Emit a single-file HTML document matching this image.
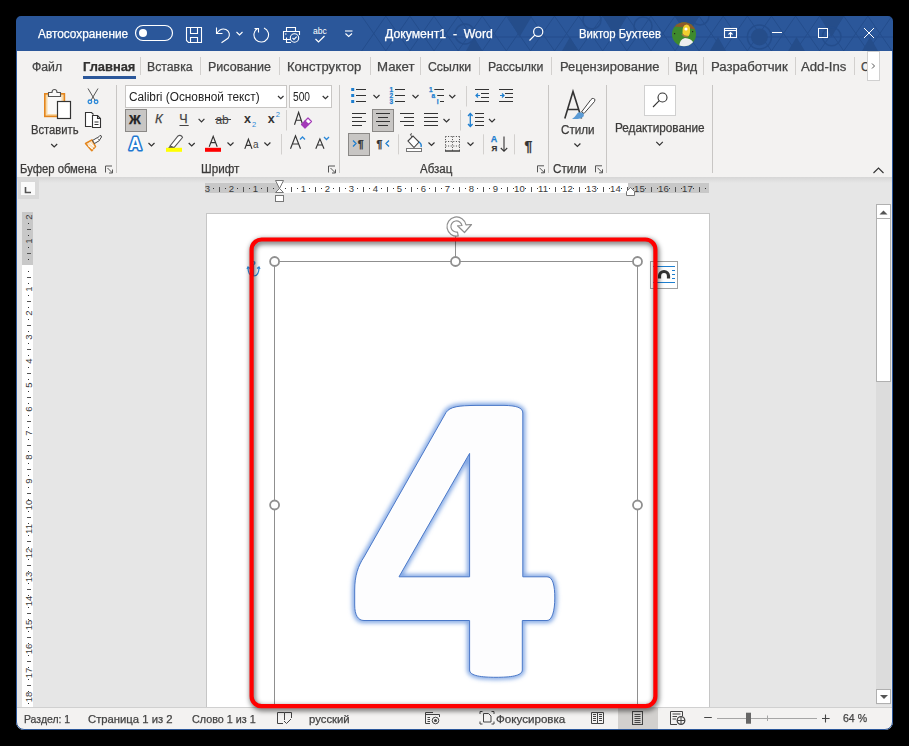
<!DOCTYPE html>
<html><head><meta charset="utf-8"><style>
html,body{margin:0;padding:0;}
body{width:909px;height:746px;background:#000;position:relative;overflow:hidden;font-family:"Liberation Sans", sans-serif;}
.t{position:absolute;white-space:nowrap;font-family:"Liberation Sans", sans-serif;-webkit-text-stroke:0.25px currentColor;}
svg.ov{position:absolute;left:0;top:0;width:909px;height:746px;}
</style></head><body>
<div style="position:absolute;left:16px;top:16px;width:877px;height:714px;background:#f3f2f1;"></div><div style="position:absolute;left:16px;top:16px;width:877px;height:35px;background:#2b579a;"></div><div style="position:absolute;left:17px;top:177px;width:875px;height:530px;background:#e6e6e6;"></div><div style="position:absolute;left:17px;top:177px;width:875px;height:6px;background:linear-gradient(#d6d6d6,#e6e6e6);"></div><div style="position:absolute;left:206px;top:213px;width:504px;height:494px;background:#fff;box-sizing:border-box;border:1px solid #c6c6c6;border-bottom:none;"></div><div style="position:absolute;left:17px;top:707px;width:875px;height:22px;background:#f3f2f1;border-top:1px solid #d0d0d0;box-sizing:border-box;"></div><svg class="ov" width="909" height="746" viewBox="0 0 909 746"><clipPath id="tb"><rect x="16" y="16" width="877" height="35"/></clipPath><g clip-path="url(#tb)"><path d="M361.7,16.1L397.9,68.3M385.8,16.1L349.7,68.3" stroke="#244d8c" stroke-width="1" fill="none"/><path d="M385.8,16.1L422.0,68.3M409.9,16.1L373.8,68.3" stroke="#244d8c" stroke-width="1" fill="none"/><path d="M409.9,16.1L446.1,68.3M434.0,16.1L397.9,68.3" stroke="#244d8c" stroke-width="1" fill="none"/><path d="M434.0,16.1L470.2,68.3M458.1,16.1L422.0,68.3" stroke="#244d8c" stroke-width="1" fill="none"/><path d="M458.1,16.1L494.3,68.3M482.2,16.1L446.1,68.3" stroke="#244d8c" stroke-width="1" fill="none"/><path d="M482.2,16.1L518.4,68.3M506.3,16.1L470.2,68.3" stroke="#244d8c" stroke-width="1" fill="none"/><path d="M506.3,16.1L542.5,68.3M530.4,16.1L494.3,68.3" stroke="#244d8c" stroke-width="1" fill="none"/><path d="M530.5,16.1L566.6,68.3M554.5,16.1L518.4,68.3" stroke="#244d8c" stroke-width="1" fill="none"/><path d="M554.5,16.1L590.7,68.3M578.6,16.1L542.5,68.3" stroke="#244d8c" stroke-width="1" fill="none"/><path d="M578.6,16.1L614.8,68.3M602.7,16.1L566.6,68.3" stroke="#244d8c" stroke-width="1" fill="none"/><path d="M602.8,16.1L638.9,68.3M626.8,16.1L590.7,68.3" stroke="#244d8c" stroke-width="1" fill="none"/><path d="M626.9,16.1L663.0,68.3M650.9,16.1L614.8,68.3" stroke="#244d8c" stroke-width="1" fill="none"/><path d="M651.0,16.1L687.1,68.3M675.0,16.1L638.9,68.3" stroke="#244d8c" stroke-width="1" fill="none"/><path d="M675.0,16.1L711.2,68.3M699.1,16.1L663.0,68.3" stroke="#244d8c" stroke-width="1" fill="none"/><path d="M699.1,16.1L735.3,68.3M723.2,16.1L687.1,68.3" stroke="#244d8c" stroke-width="1" fill="none"/><path d="M723.2,16.1L759.4,68.3M747.3,16.1L711.2,68.3" stroke="#244d8c" stroke-width="1" fill="none"/><path d="M747.4,16.1L783.5,68.3M771.4,16.1L735.3,68.3" stroke="#244d8c" stroke-width="1" fill="none"/><path d="M771.5,16.1L807.6,68.3M795.5,16.1L759.4,68.3" stroke="#244d8c" stroke-width="1" fill="none"/><path d="M795.6,16.1L831.7,68.3M819.6,16.1L783.5,68.3" stroke="#244d8c" stroke-width="1" fill="none"/><path d="M819.7,16.1L855.8,68.3M843.8,16.1L807.6,68.3" stroke="#244d8c" stroke-width="1" fill="none"/><path d="M843.8,16.1L879.9,68.3M867.8,16.1L831.7,68.3" stroke="#244d8c" stroke-width="1" fill="none"/><path d="M867.9,16.1L904.0,68.3M891.9,16.1L855.8,68.3" stroke="#244d8c" stroke-width="1" fill="none"/><path d="M892.0,16.1L928.1,68.3M916.0,16.1L879.9,68.3" stroke="#244d8c" stroke-width="1" fill="none"/><path d="M916.1,16.1L952.2,68.3M940.1,16.1L904.0,68.3" stroke="#244d8c" stroke-width="1" fill="none"/><path d="M940.2,16.1L976.3,68.3M964.2,16.1L928.1,68.3" stroke="#244d8c" stroke-width="1" fill="none"/><path d="M964.2,16.1L1000.4,68.3M988.3,16.1L952.2,68.3" stroke="#244d8c" stroke-width="1" fill="none"/><path d="M988.4,16.1L1024.5,68.3M1012.4,16.1L976.3,68.3" stroke="#244d8c" stroke-width="1" fill="none"/><path d="M1012.5,16.1L1048.6,68.3M1036.5,16.1L1000.4,68.3" stroke="#244d8c" stroke-width="1" fill="none"/><path d="M1036.5,16.1L1072.7,68.3M1060.6,16.1L1024.5,68.3" stroke="#244d8c" stroke-width="1" fill="none"/><path d="M1060.7,16.1L1096.8,68.3M1084.8,16.1L1048.6,68.3" stroke="#244d8c" stroke-width="1" fill="none"/><path d="M1084.8,16.1L1120.9,68.3M1108.8,16.1L1072.7,68.3" stroke="#244d8c" stroke-width="1" fill="none"/><path d="M1108.9,16.1L1145.0,68.3M1133.0,16.1L1096.8,68.3" stroke="#244d8c" stroke-width="1" fill="none"/><path d="M1133.0,16.1L1169.1,68.3M1157.0,16.1L1120.9,68.3" stroke="#244d8c" stroke-width="1" fill="none"/><path d="M1157.0,16.1L1193.2,68.3M1181.1,16.1L1145.0,68.3" stroke="#244d8c" stroke-width="1" fill="none"/><path d="M1181.2,16.1L1217.3,68.3M1205.2,16.1L1169.1,68.3" stroke="#244d8c" stroke-width="1" fill="none"/><path d="M1205.2,16.1L1241.4,68.3M1229.3,16.1L1193.2,68.3" stroke="#244d8c" stroke-width="1" fill="none"/><path d="M1229.4,16.1L1265.5,68.3M1253.5,16.1L1217.3,68.3" stroke="#244d8c" stroke-width="1" fill="none"/><path d="M1253.5,16.1L1289.6,68.3M1277.5,16.1L1241.4,68.3" stroke="#244d8c" stroke-width="1" fill="none"/><path d="M1277.5,16.1L1313.7,68.3M1301.6,16.1L1265.5,68.3" stroke="#244d8c" stroke-width="1" fill="none"/><path d="M1301.7,16.1L1337.8,68.3M1325.8,16.1L1289.6,68.3" stroke="#244d8c" stroke-width="1" fill="none"/><path d="M1325.8,16.1L1361.9,68.3M1349.9,16.1L1313.7,68.3" stroke="#244d8c" stroke-width="1" fill="none"/><path d="M400,37H893" stroke="#244d8c" stroke-width="1"/><path d="M819.6,16L831.6500000000001,37L843.7,16Z" fill="#254d8a"/><path d="M507,16L519.5,37L532,16Z" fill="#254d8a"/><path d="M603,16L615.0,37L627,16Z" fill="#254d8a"/><path d="M675,16L687.0,37L699,16Z" fill="#254d8a"/><path d="M784,58L796.5,37L809,58Z" fill="#254d8a"/><path d="M858,58L870.0,37L882,58Z" fill="#254d8a"/><path d="M706,58L718.0,37L730,58Z" fill="#254d8a"/><path d="M558,58L570.0,37L582,58Z" fill="#254d8a"/><path d="M462,58L474.0,37L486,58Z" fill="#254d8a"/><circle cx="831.7" cy="36.5" r="9.3" fill="none" stroke="#244d8c" stroke-width="1.5"/><circle cx="465" cy="34" r="10" fill="none" stroke="#244d8c" stroke-width="1.5"/><circle cx="592" cy="20" r="9" fill="none" stroke="#244d8c" stroke-width="1.5"/><circle cx="643" cy="26" r="9" fill="none" stroke="#244d8c" stroke-width="1.5"/><circle cx="759.4" cy="37" r="12" fill="none" stroke="#244d8c" stroke-width="1.5"/><circle cx="700" cy="16" r="9" fill="none" stroke="#244d8c" stroke-width="1.5"/><circle cx="759.4" cy="37" r="8.4" fill="#254d8a"/></g></svg><div class="t" style="left:38.00px;top:28.14px;font-size:12px;line-height:12px;color:#ffffff;transform:scaleX(0.985);transform-origin:0 0;">Автосохранение</div><div class="t" style="left:385.00px;top:28.14px;font-size:12px;line-height:12px;color:#ffffff;transform:scaleX(1.02);transform-origin:0 0;">Документ1&nbsp;&nbsp;-&nbsp;&nbsp;Word</div><div class="t" style="left:578.50px;top:28.14px;font-size:12px;line-height:12px;color:#ffffff;transform:scaleX(0.945);transform-origin:0 0;">Виктор Бухтеев</div><svg class="ov" width="909" height="746" viewBox="0 0 909 746"><rect x="135.5" y="25.5" width="37" height="15" rx="7.5" fill="none" stroke="#ffffff" stroke-width="1.2"/><circle cx="143" cy="33" r="4" fill="#ffffff"/><g fill="none" stroke="#ffffff" stroke-width="1.1"><path d="M186.5,27.5H201.5V42.5H188.5L186.5,40.5Z"/><path d="M190.5,27.5V33.5H197.5V27.5"/><path d="M190.5,42.5V37.5H197.5V42.5"/></g><g fill="none" stroke="#ffffff" stroke-width="1.1"><path d="M216.5,27.5V33.5H222.5"/><path d="M216.8,33.2C219.5,29.5 223,28.3 226,29.5C229.5,31 230.5,35.5 228,38.3L221.5,42.7"/><path d="M236.5,32L239.5,35L242.5,32"/></g><g fill="none" stroke="#ffffff" stroke-width="1.1"><path d="M257.5,28.5A7.3,7.3 0 1 0 264,28"/><path d="M254.5,28.5H258.5V32.5"/></g><g fill="none" stroke="#ffffff" stroke-width="1.1"><path d="M286.5,31.5V27.5H295.5V31.5"/><path d="M290.5,39.5H283.5V31.5H299.5V35"/><path d="M286.5,37.5V42.5H291"/><circle cx="294.5" cy="38" r="4.2"/><path d="M292.5,38L294,39.5L296.7,36.7"/><path d="M285,34H286.5"/></g><text x="313" y="33.8" font-family="Liberation Sans" font-size="8.5" fill="#ffffff">abc</text><path d="M315.5,39L318.5,42L324.5,36" fill="none" stroke="#ffffff" stroke-width="1.2"/><g fill="none" stroke="#ffffff" stroke-width="1.1"><path d="M345,31H352.5"/><path d="M345.5,33.5L348.7,36.5L352,33.5"/></g><g fill="none" stroke="#ffffff" stroke-width="1.2"><circle cx="538.2" cy="31.8" r="4.6"/><path d="M534.8,35.2L529.5,40.5"/></g><clipPath id="av"><circle cx="684" cy="34.2" r="12"/></clipPath><g clip-path="url(#av)"><rect x="672" y="22" width="25" height="25" fill="#3e8a2e"/><path d="M672,27Q684,26 697,30V20H672Z" fill="#8b5a2b"/><path d="M682.5,33Q682,25 686.5,24.5Q690.5,25 690,30Q690.5,35 687.5,37Q683,37.5 682.5,33Z" fill="#f2cf2f"/><circle cx="686" cy="29" r="1.6" fill="#fff"/><path d="M682,34Q684,37 688,36.5" fill="none" stroke="#a07a40" stroke-width="1.5"/><path d="M679,47Q679.5,39 685,38Q691,38.5 693,42L694.5,47Z" fill="#eeeeee"/><rect x="674" y="33" width="1.2" height="1.2" fill="#222"/><rect x="692" y="31" width="1.2" height="1.2" fill="#222"/></g><g fill="none" stroke="#ffffff" stroke-width="1.1"><rect x="724.5" y="28.5" width="12" height="9"/><path d="M724.5,30.5H736.5"/><path d="M730.5,37V32.5M728.5,34.5L730.5,32.5L732.5,34.5"/></g><g fill="none" stroke="#ffffff" stroke-width="1"><path d="M772,32.5H782"/><rect x="818.5" y="28.5" width="9" height="9"/><path d="M864,28L874,38M874,28L864,38"/></g></svg><div class="t" style="left:31.70px;top:60.84px;font-size:12px;line-height:12px;color:#444444;transform:scaleX(1.02);transform-origin:0 0;">Файл</div><div class="t" style="left:83.20px;top:60.84px;font-size:12px;line-height:12px;color:#323130;font-weight:bold;transform:scaleX(1.072);transform-origin:0 0;">Главная</div><div class="t" style="left:147.20px;top:60.84px;font-size:12px;line-height:12px;color:#444444;transform:scaleX(1.022);transform-origin:0 0;">Вставка</div><div class="t" style="left:207.80px;top:60.84px;font-size:12px;line-height:12px;color:#444444;transform:scaleX(1.041);transform-origin:0 0;">Рисование</div><div class="t" style="left:287.00px;top:60.84px;font-size:12px;line-height:12px;color:#444444;transform:scaleX(1.086);transform-origin:0 0;">Конструктор</div><div class="t" style="left:376.60px;top:60.84px;font-size:12px;line-height:12px;color:#444444;transform:scaleX(1.103);transform-origin:0 0;">Макет</div><div class="t" style="left:427.90px;top:60.84px;font-size:12px;line-height:12px;color:#444444;transform:scaleX(1.021);transform-origin:0 0;">Ссылки</div><div class="t" style="left:487.50px;top:60.84px;font-size:12px;line-height:12px;color:#444444;transform:scaleX(1.026);transform-origin:0 0;">Рассылки</div><div class="t" style="left:559.60px;top:60.84px;font-size:12px;line-height:12px;color:#444444;transform:scaleX(1.072);transform-origin:0 0;">Рецензирование</div><div class="t" style="left:674.60px;top:60.84px;font-size:12px;line-height:12px;color:#444444;transform:scaleX(1.023);transform-origin:0 0;">Вид</div><div class="t" style="left:710.60px;top:60.84px;font-size:12px;line-height:12px;color:#444444;transform:scaleX(1.096);transform-origin:0 0;">Разработчик</div><div class="t" style="left:801.40px;top:60.84px;font-size:12px;line-height:12px;color:#444444;transform:scaleX(1.097);transform-origin:0 0;">Add-Ins</div><div class="t" style="left:861.00px;top:60.84px;font-size:12px;line-height:12px;color:#444;">C</div><svg class="ov" width="909" height="746" viewBox="0 0 909 746"><path d="M140.5,57V75" stroke="#d2d0ce" stroke-width="1"/><path d="M200.5,57V75" stroke="#d2d0ce" stroke-width="1"/><path d="M279.5,57V75" stroke="#d2d0ce" stroke-width="1"/><path d="M370.5,57V75" stroke="#d2d0ce" stroke-width="1"/><path d="M420.5,57V75" stroke="#d2d0ce" stroke-width="1"/><path d="M479.5,57V75" stroke="#d2d0ce" stroke-width="1"/><path d="M551.5,57V75" stroke="#d2d0ce" stroke-width="1"/><path d="M668.5,57V75" stroke="#d2d0ce" stroke-width="1"/><path d="M703.5,57V75" stroke="#d2d0ce" stroke-width="1"/><path d="M795.5,57V75" stroke="#d2d0ce" stroke-width="1"/><path d="M854.5,57V75" stroke="#d2d0ce" stroke-width="1"/><rect x="83" y="76" width="53" height="3" fill="#2b579a"/><rect x="867.5" y="51.5" width="12" height="29" fill="#fff" stroke="#d0d0d0"/><path d="M872,63.5L874.5,66L872,68.5" fill="none" stroke="#555" stroke-width="1"/><path d="M116.5,85V173" stroke="#c8c6c4" stroke-width="1"/><path d="M339.5,85V173" stroke="#c8c6c4" stroke-width="1"/><path d="M548.5,85V173" stroke="#c8c6c4" stroke-width="1"/><path d="M606.5,85V173" stroke="#c8c6c4" stroke-width="1"/><path d="M712.5,85V173" stroke="#c8c6c4" stroke-width="1"/></svg><div class="t" style="left:20.00px;top:162.64px;font-size:12px;line-height:12px;color:#3b3a39;transform:scaleX(0.94);transform-origin:0 0;">Буфер обмена</div><div class="t" style="left:200.50px;top:162.64px;font-size:12px;line-height:12px;color:#3b3a39;transform:scaleX(0.97);transform-origin:0 0;">Шрифт</div><div class="t" style="left:419.60px;top:162.64px;font-size:12px;line-height:12px;color:#3b3a39;transform:scaleX(0.96);transform-origin:0 0;">Абзац</div><div class="t" style="left:552.90px;top:162.64px;font-size:12px;line-height:12px;color:#3b3a39;transform:scaleX(0.97);transform-origin:0 0;">Стили</div><div class="t" style="left:31.20px;top:123.74px;font-size:12px;line-height:12px;color:#3b3a39;transform:scaleX(0.935);transform-origin:0 0;">Вставить</div><div class="t" style="left:561.20px;top:123.54px;font-size:12px;line-height:12px;color:#3b3a39;transform:scaleX(0.97);transform-origin:0 0;">Стили</div><div class="t" style="left:614.90px;top:122.14px;font-size:12px;line-height:12px;color:#3b3a39;transform:scaleX(0.98);transform-origin:0 0;">Редактирование</div><svg class="ov" width="909" height="746" viewBox="0 0 909 746"><g fill="none" stroke="#555" stroke-width="1"><path d="M105.5,172.5V166.0H112"/><path d="M107.5,168.0L112.5,173.0M112.5,169.5V173.0H109"/></g><g fill="none" stroke="#555" stroke-width="1"><path d="M328.5,172.5V166.0H335"/><path d="M330.5,168.0L335.5,173.0M335.5,169.5V173.0H332"/></g><g fill="none" stroke="#555" stroke-width="1"><path d="M537.5,172.3V165.8H544"/><path d="M539.5,167.8L544.5,172.8M544.5,169.3V172.8H541"/></g><g fill="none" stroke="#555" stroke-width="1"><path d="M595.5,172.3V165.8H602"/><path d="M597.5,167.8L602.5,172.8M602.5,169.3V172.8H599"/></g><path d="M873.5,173L878.5,168L883.5,173" fill="none" stroke="#333" stroke-width="1.1"/><rect x="44.8" y="93.8" width="19.6" height="22.6" fill="#f9d9a6" stroke="#e3851d" stroke-width="1.6"/><rect x="47.5" y="96.5" width="14" height="17.5" fill="#faf9f8"/><path d="M48.5,96.5V92.5H52Q52,89.5 54.5,89.5Q57,89.5 57,92.5H60.5V96.5Z" fill="#faf9f8" stroke="#555" stroke-width="1.1"/><rect x="57.5" y="101.5" width="13" height="17" fill="#fff" stroke="#333" stroke-width="1.2"/><path d="M51.2,144L54.2,147.0L57.2,144" fill="none" stroke="#333" stroke-width="1.2"/><g fill="none"><path d="M88,88.5L95,100.3M98,88.5L91,100.3" stroke="#555" stroke-width="1"/><circle cx="89.9" cy="101.8" r="1.8" stroke="#2b88d8" stroke-width="1.3"/><circle cx="96.1" cy="101.8" r="1.8" stroke="#2b88d8" stroke-width="1.3"/></g><g fill="#fff" stroke="#333" stroke-width="1.1"><path d="M91.5,126.5H85.5V112.5H91.5L93.5,114.5"/><path d="M92.5,115.5H97.5L100.5,118.5V127.5H92.5Z"/><path d="M97.5,115.5V118.5H100.5" fill="none"/><path d="M94.5,122H98.5M94.5,124.5H98.5" /></g><path d="M85.5,143.5L92,139.8L95.5,146.5L91.8,150.8Z" fill="#fbe3c2" stroke="#e3851d" stroke-width="1.5" stroke-linejoin="round"/><path d="M88,145.5L93.5,149.5M89.5,143L94.5,147" stroke="#fff" stroke-width="1"/><path d="M92.5,140.5L97.5,137.5L99.5,140.5L94.5,143.5Z" fill="#fff" stroke="#444" stroke-width="1"/><path d="M97.5,138L99.8,135.6Q101.5,135 101.5,137L99.5,140" fill="#fff" stroke="#444" stroke-width="1"/><rect x="125.5" y="85.5" width="161" height="22" fill="#fff" stroke="#c8c6c4"/><rect x="289.5" y="85.5" width="42" height="22" fill="#fff" stroke="#c8c6c4"/><path d="M278,96L280.75,98.75L283.5,96" fill="none" stroke="#333" stroke-width="1.2"/><path d="M322.7,96L325.45,98.75L328.2,96" fill="none" stroke="#333" stroke-width="1.2"/><rect x="125.5" y="109.5" width="21" height="22" fill="#c8c6c4" stroke="#8a8886"/></svg><div class="t" style="left:128.50px;top:90.64px;font-size:12px;line-height:12px;color:#222;transform:scaleX(0.985);transform-origin:0 0;-webkit-text-stroke:0;">Calibri (Основной текст)</div><div class="t" style="left:292.50px;top:90.64px;font-size:12px;line-height:12px;color:#222;transform:scaleX(0.85);transform-origin:0 0;-webkit-text-stroke:0;">500</div><div class="t" style="left:129.00px;top:113.20px;font-size:13px;line-height:13px;color:#222;font-weight:bold;transform:scaleX(1.0);transform-origin:0 0;">Ж</div><div class="t" style="left:155px;top:112px;font-size:13px;line-height:13px;color:#444;font-style:italic;">К</div><div class="t" style="left:179.30px;top:113.42px;font-size:12.5px;line-height:12.5px;color:#444;">Ч</div><div class="t" style="left:215.40px;top:113.84px;font-size:12px;line-height:12px;color:#444;-webkit-text-stroke:0;">ab</div><div class="t" style="left:244.00px;top:113.42px;font-size:12.5px;line-height:12.5px;color:#333;font-weight:bold;-webkit-text-stroke:0;">x</div><div class="t" style="left:252.00px;top:121.35px;font-size:7.5px;line-height:7.5px;color:#2b88d8;-webkit-text-stroke:0;">2</div><div class="t" style="left:267.70px;top:113.22px;font-size:12.5px;line-height:12.5px;color:#333;font-weight:bold;-webkit-text-stroke:0;">x</div><div class="t" style="left:275.80px;top:111.15px;font-size:7.5px;line-height:7.5px;color:#2b88d8;-webkit-text-stroke:0;">2</div><div class="t" style="left:253.00px;top:140.44px;font-size:10px;line-height:10px;color:#444;-webkit-text-stroke:0;">a</div><svg class="ov" width="909" height="746" viewBox="0 0 909 746"><path d="M179.5,125.5H188.7" stroke="#444" stroke-width="1"/><path d="M198.6,118.9L201.5,121.80000000000001L204.4,118.9" fill="none" stroke="#333" stroke-width="1.2"/><path d="M215,119.5H231" stroke="#444" stroke-width="1"/><rect x="205" y="147.8" width="16" height="4" fill="#f00"/><path d="M227.5,142.5L230.5,145.5L233.5,142.5" fill="none" stroke="#333" stroke-width="1.2"/><path d="M264.4,142.5L267.4,145.5L270.4,142.5" fill="none" stroke="#333" stroke-width="1.2"/><path d="M300,139.5L302.5,137L305,139.5" fill="none" stroke="#2b88d8" stroke-width="1.3"/><path d="M324,137L326.5,139.5L329,137" fill="none" stroke="#2b88d8" stroke-width="1.3"/><g fill="none" stroke="#333" stroke-width="1.15"><path d="M209.2,146.7L213.2,136.4L217.2,146.7M210.8,142.6H215.6"/><path d="M290.5,148.8L295.5,135.9L300.5,148.8M292.5,144H298.5"/><path d="M315.8,148.8L319.9,138.9L324,148.8M317.4,145H322.4"/><path d="M294.5,124.7L298.6,112.3L302.7,124.7M296.2,120.2H301"/><path d="M244.8,148.9L248.4,139.2L252,148.9M246.2,145.3H250.6"/></g><path d="M301.5,124.5L305,121L308.5,124.5L305,128Z" fill="#a33ab8" stroke="#a33ab8" stroke-width="1.2" stroke-linejoin="round"/><path d="M305,121L308,118L311.5,121.5L308.5,124.5Z" fill="#fff" stroke="#a33ab8" stroke-width="1.2" stroke-linejoin="round"/><path d="M286.5,110V130.5M281.5,134V154.5" stroke="#d2d0ce" stroke-width="1"/><text x="129" y="149.5" font-family="Liberation Sans" font-weight="bold" font-size="17.5" fill="#fff" stroke="#1f78d1" stroke-width="3.2" paint-order="stroke" stroke-linejoin="round">A</text><path d="M148.5,143L151.5,146.0L154.5,143" fill="none" stroke="#333" stroke-width="1.2"/><path d="M170,146L178,136Q180,134.5 182,136.5L182.5,137.5L174,147.5Z" fill="#fff" stroke="#555" stroke-width="1.1"/><path d="M170,146L168,148L173,148L174,147.5Z" fill="#555"/><rect x="166" y="147.8" width="16" height="4" fill="#ff0"/><path d="M188.7,143L191.7,146.0L194.7,143" fill="none" stroke="#333" stroke-width="1.2"/></svg><svg class="ov" width="909" height="746" viewBox="0 0 909 746"><rect x="351.2" y="88.0" width="3" height="3" fill="#1e7fd0"/><path d="M356,89.5H366M395,89.5H405" stroke="#333" stroke-width="1.1"/><rect x="351.2" y="94.0" width="3" height="3" fill="#1e7fd0"/><path d="M356,95.5H366M395,95.5H405" stroke="#333" stroke-width="1.1"/><rect x="351.2" y="100.0" width="3" height="3" fill="#1e7fd0"/><path d="M356,101.5H366M395,101.5H405" stroke="#333" stroke-width="1.1"/><path d="M373.5,95L376.5,98.0L379.5,95" fill="none" stroke="#333" stroke-width="1.2"/><path d="M412.5,95L415.5,98.0L418.5,95" fill="none" stroke="#333" stroke-width="1.2"/><path d="M449.3,95L452.3,98.0L455.3,95" fill="none" stroke="#333" stroke-width="1.2"/></svg><div class="t" style="left:389.60px;top:86.50px;font-size:6.5px;line-height:6.5px;color:#1e7fd0;font-weight:bold;">1</div><div class="t" style="left:389.60px;top:92.50px;font-size:6.5px;line-height:6.5px;color:#1e7fd0;font-weight:bold;">2</div><div class="t" style="left:389.60px;top:98.50px;font-size:6.5px;line-height:6.5px;color:#1e7fd0;font-weight:bold;">3</div><svg class="ov" width="909" height="746" viewBox="0 0 909 746"><path d="M434.3,89.5H444M437.2,95.5H444M440,101.5H444" stroke="#333" stroke-width="1.1"/></svg><div class="t" style="left:429.00px;top:86.50px;font-size:6.5px;line-height:6.5px;color:#1e7fd0;font-weight:bold;">1</div><div class="t" style="left:431.40px;top:92.50px;font-size:6.5px;line-height:6.5px;color:#1e7fd0;font-weight:bold;">a</div><div class="t" style="left:436.80px;top:98.50px;font-size:6.5px;line-height:6.5px;color:#1e7fd0;font-weight:bold;">i</div><svg class="ov" width="909" height="746" viewBox="0 0 909 746"><rect x="372.5" y="109.5" width="21" height="22" fill="#c8c6c4" stroke="#8a8886"/><path d="M352,113.5h14M352,117.5h10M352,121.5h14M352,125.5h10M376,113.5h14M378,117.5h10M376,121.5h14M378,125.5h10M400,113.5h14M404,117.5h10M400,121.5h14M404,125.5h10M424,113.5h14M424,117.5h14M424,121.5h14M424,125.5h14" stroke="#333" stroke-width="1.1"/><path d="M443.5,119L446.5,122.0L449.5,119" fill="none" stroke="#333" stroke-width="1.2"/><path d="M466.5,86V106.5M460.5,110V130.5M398.5,134.3V154.4M483.5,134.3V154.4M514.5,134.3V154.4" stroke="#d2d0ce" stroke-width="1"/><path d="M475,89.5H489M481,93.5H489M481,97.5H489M475,101.5H489M499,89.5H513M505,93.5H513M505,97.5H513M499,101.5H513" stroke="#333" stroke-width="1.1"/><path d="M480,95.5H476M478,93.5L476,95.5L478,97.5M500,95.5H504M502,93.5L504,95.5L502,97.5" fill="none" stroke="#1e7fd0" stroke-width="1.2"/><path d="M475,113.5H484M475,117.5H484M475,121.5H484M475,125.5H484" stroke="#333" stroke-width="1.1"/><path d="M470.3,114V126M468,116L470.3,113.5L472.6,116M468,124L470.3,126.5L472.6,124" fill="none" stroke="#1e7fd0" stroke-width="1.3"/><path d="M489,119L492.0,122.0L495,119" fill="none" stroke="#333" stroke-width="1.2"/><rect x="348.5" y="133.5" width="21" height="22" fill="#c8c6c4" stroke="#8a8886"/><path d="M353,140.5L356,143.5L353,146.5M389,140.5L386,143.5L389,146.5" fill="none" stroke="#1e7fd0" stroke-width="1.3"/></svg><div class="t" style="left:357.80px;top:138.91px;font-size:10.5px;line-height:10.5px;color:#333;font-weight:bold;">¶</div><div class="t" style="left:376.60px;top:138.91px;font-size:10.5px;line-height:10.5px;color:#333;font-weight:bold;">¶</div><div class="t" style="left:524.50px;top:138.65px;font-size:14px;line-height:14px;color:#333;font-weight:bold;">¶</div><svg class="ov" width="909" height="746" viewBox="0 0 909 746"><path d="M408,141L413,136L419,142L414,147.5Z" fill="#fff" stroke="#444" stroke-width="1.1"/><path d="M419,142Q422,144 421,147" fill="none" stroke="#1e7fd0" stroke-width="1.4"/><path d="M412,137Q409,133 412,134" fill="none" stroke="#444" stroke-width="1"/><rect x="406.5" y="148.5" width="15" height="3" fill="#fff" stroke="#777"/><path d="M428.5,142.5L431.5,145.5L434.5,142.5" fill="none" stroke="#333" stroke-width="1.2"/><path d="M445.5,136.5H460M445.5,141.5H460M445.5,146H460M445.5,136.5V151M452.5,136.5V151M459.5,136.5V151" fill="none" stroke="#444" stroke-width="1" stroke-dasharray="1,1.6"/><path d="M445,151H460" stroke="#222" stroke-width="1.3"/><path d="M467.5,142.5L470.5,145.5L473.5,142.5" fill="none" stroke="#333" stroke-width="1.2"/><path d="M504,136.5V151M500.8,148L504,151.3L507.2,148" fill="none" stroke="#333" stroke-width="1.1"/></svg><div class="t" style="left:490.70px;top:135.38px;font-size:9px;line-height:9px;color:#1e7fd0;font-weight:bold;">A</div><div class="t" style="left:491.50px;top:144.93px;font-size:8px;line-height:8px;color:#333;font-weight:bold;">Я</div><svg class="ov" width="909" height="746" viewBox="0 0 909 746"><path d="M564.8,118.5L573,91.5L581.5,118.5M567.8,109.5H578.5" fill="none" stroke="#333" stroke-width="1.6"/><path d="M593.5,98.5Q596,99 594.5,101.5L584,113.5L581.5,112L591,99.5Q592,98 593.5,98.5Z" fill="#fff" stroke="#444" stroke-width="1"/><path d="M581,112.5Q585,113 583.5,116.5Q581,119.5 572,119Q575,117 576.5,114.5Q578,111.5 581,112.5Z" fill="#5b9bd5"/><path d="M574.4,143.5L577.4,146.5L580.4,143.5" fill="none" stroke="#333" stroke-width="1.2"/><rect x="644.5" y="85.5" width="31" height="30" fill="#fff" stroke="#d0d0d0"/><circle cx="662.5" cy="97.5" r="4.5" fill="none" stroke="#333" stroke-width="1.1"/><path d="M659.3,100.7L653,107" stroke="#333" stroke-width="1.1"/><path d="M656.3,141.8L659.55,145.05L662.8,141.8" fill="none" stroke="#333" stroke-width="1.2"/></svg><div style="position:absolute;left:17.5px;top:178px;width:21px;height:20.5px;background:#d9d9d9;"></div><div style="position:absolute;left:20.7px;top:181.7px;width:14.7px;height:13.4px;background:#fafafa;"></div><svg class="ov" width="909" height="746" viewBox="0 0 909 746"><path d="M25.5,187V192.5H31" fill="none" stroke="#555" stroke-width="1.6"/></svg><div style="position:absolute;left:205px;top:183px;width:503.9px;height:9.5px;background:#c8c8c8;"></div><div style="position:absolute;left:279.6px;top:183px;width:348.4px;height:9.5px;background:#ffffff;"></div><div style="position:absolute;left:22px;top:212px;width:11px;height:53px;background:#c8c8c8;"></div><div style="position:absolute;left:22px;top:265px;width:11px;height:442px;background:#ffffff;"></div><svg class="ov" width="909" height="746" viewBox="0 0 909 746"><rect x="213" y="188" width="1" height="1" fill="#333"/><rect x="219" y="187" width="1" height="5" fill="#555"/><rect x="225" y="188" width="1" height="1" fill="#333"/><rect x="237" y="188" width="1" height="1" fill="#333"/><rect x="243" y="187" width="1" height="5" fill="#555"/><rect x="249" y="188" width="1" height="1" fill="#333"/><rect x="261" y="188" width="1" height="1" fill="#333"/><rect x="267" y="187" width="1" height="5" fill="#555"/><rect x="273" y="188" width="1" height="1" fill="#333"/><rect x="285" y="188" width="1" height="1" fill="#333"/><rect x="291" y="187" width="1" height="5" fill="#555"/><rect x="297" y="188" width="1" height="1" fill="#333"/><rect x="309" y="188" width="1" height="1" fill="#333"/><rect x="315" y="187" width="1" height="5" fill="#555"/><rect x="321" y="188" width="1" height="1" fill="#333"/><rect x="333" y="188" width="1" height="1" fill="#333"/><rect x="339" y="187" width="1" height="5" fill="#555"/><rect x="345" y="188" width="1" height="1" fill="#333"/><rect x="357" y="188" width="1" height="1" fill="#333"/><rect x="363" y="187" width="1" height="5" fill="#555"/><rect x="369" y="188" width="1" height="1" fill="#333"/><rect x="381" y="188" width="1" height="1" fill="#333"/><rect x="387" y="187" width="1" height="5" fill="#555"/><rect x="393" y="188" width="1" height="1" fill="#333"/><rect x="405" y="188" width="1" height="1" fill="#333"/><rect x="411" y="187" width="1" height="5" fill="#555"/><rect x="417" y="188" width="1" height="1" fill="#333"/><rect x="429" y="188" width="1" height="1" fill="#333"/><rect x="435" y="187" width="1" height="5" fill="#555"/><rect x="441" y="188" width="1" height="1" fill="#333"/><rect x="453" y="188" width="1" height="1" fill="#333"/><rect x="459" y="187" width="1" height="5" fill="#555"/><rect x="465" y="188" width="1" height="1" fill="#333"/><rect x="477" y="188" width="1" height="1" fill="#333"/><rect x="483" y="187" width="1" height="5" fill="#555"/><rect x="489" y="188" width="1" height="1" fill="#333"/><rect x="501" y="188" width="1" height="1" fill="#333"/><rect x="507" y="187" width="1" height="5" fill="#555"/><rect x="513" y="188" width="1" height="1" fill="#333"/><rect x="525" y="188" width="1" height="1" fill="#333"/><rect x="531" y="187" width="1" height="5" fill="#555"/><rect x="537" y="188" width="1" height="1" fill="#333"/><rect x="549" y="188" width="1" height="1" fill="#333"/><rect x="555" y="187" width="1" height="5" fill="#555"/><rect x="561" y="188" width="1" height="1" fill="#333"/><rect x="573" y="188" width="1" height="1" fill="#333"/><rect x="579" y="187" width="1" height="5" fill="#555"/><rect x="585" y="188" width="1" height="1" fill="#333"/><rect x="597" y="188" width="1" height="1" fill="#333"/><rect x="603" y="187" width="1" height="5" fill="#555"/><rect x="609" y="188" width="1" height="1" fill="#333"/><rect x="621" y="188" width="1" height="1" fill="#333"/><rect x="627" y="187" width="1" height="5" fill="#555"/><rect x="633" y="188" width="1" height="1" fill="#333"/><rect x="645" y="188" width="1" height="1" fill="#333"/><rect x="651" y="187" width="1" height="5" fill="#555"/><rect x="657" y="188" width="1" height="1" fill="#333"/><rect x="669" y="188" width="1" height="1" fill="#333"/><rect x="675" y="187" width="1" height="5" fill="#555"/><rect x="681" y="188" width="1" height="1" fill="#333"/><rect x="693" y="188" width="1" height="1" fill="#333"/><rect x="699" y="187" width="1" height="5" fill="#555"/><rect x="705" y="188" width="1" height="1" fill="#333"/></svg><div class="t" style="left:204.75px;top:183.96px;font-size:9.5px;line-height:9.5px;color:#3a3a3a;-webkit-text-stroke:0;">3</div><div class="t" style="left:228.75px;top:183.96px;font-size:9.5px;line-height:9.5px;color:#3a3a3a;-webkit-text-stroke:0;">2</div><div class="t" style="left:252.75px;top:183.96px;font-size:9.5px;line-height:9.5px;color:#3a3a3a;-webkit-text-stroke:0;">1</div><div class="t" style="left:300.75px;top:183.96px;font-size:9.5px;line-height:9.5px;color:#3a3a3a;-webkit-text-stroke:0;">1</div><div class="t" style="left:324.75px;top:183.96px;font-size:9.5px;line-height:9.5px;color:#3a3a3a;-webkit-text-stroke:0;">2</div><div class="t" style="left:348.75px;top:183.96px;font-size:9.5px;line-height:9.5px;color:#3a3a3a;-webkit-text-stroke:0;">3</div><div class="t" style="left:372.75px;top:183.96px;font-size:9.5px;line-height:9.5px;color:#3a3a3a;-webkit-text-stroke:0;">4</div><div class="t" style="left:396.75px;top:183.96px;font-size:9.5px;line-height:9.5px;color:#3a3a3a;-webkit-text-stroke:0;">5</div><div class="t" style="left:420.75px;top:183.96px;font-size:9.5px;line-height:9.5px;color:#3a3a3a;-webkit-text-stroke:0;">6</div><div class="t" style="left:444.75px;top:183.96px;font-size:9.5px;line-height:9.5px;color:#3a3a3a;-webkit-text-stroke:0;">7</div><div class="t" style="left:468.75px;top:183.96px;font-size:9.5px;line-height:9.5px;color:#3a3a3a;-webkit-text-stroke:0;">8</div><div class="t" style="left:492.75px;top:183.96px;font-size:9.5px;line-height:9.5px;color:#3a3a3a;-webkit-text-stroke:0;">9</div><div class="t" style="left:514.10px;top:183.96px;font-size:9.5px;line-height:9.5px;color:#3a3a3a;-webkit-text-stroke:0;">10</div><div class="t" style="left:538.10px;top:183.96px;font-size:9.5px;line-height:9.5px;color:#3a3a3a;-webkit-text-stroke:0;">11</div><div class="t" style="left:562.10px;top:183.96px;font-size:9.5px;line-height:9.5px;color:#3a3a3a;-webkit-text-stroke:0;">12</div><div class="t" style="left:586.10px;top:183.96px;font-size:9.5px;line-height:9.5px;color:#3a3a3a;-webkit-text-stroke:0;">13</div><div class="t" style="left:610.10px;top:183.96px;font-size:9.5px;line-height:9.5px;color:#3a3a3a;-webkit-text-stroke:0;">14</div><div class="t" style="left:634.10px;top:183.96px;font-size:9.5px;line-height:9.5px;color:#3a3a3a;-webkit-text-stroke:0;">15</div><div class="t" style="left:658.10px;top:183.96px;font-size:9.5px;line-height:9.5px;color:#3a3a3a;-webkit-text-stroke:0;">16</div><div class="t" style="left:682.10px;top:183.96px;font-size:9.5px;line-height:9.5px;color:#3a3a3a;-webkit-text-stroke:0;">17</div><svg class="ov" width="909" height="746" viewBox="0 0 909 746"><rect x="28" y="223" width="1" height="1" fill="#333"/><rect x="27" y="229" width="4" height="1" fill="#555"/><rect x="28" y="235" width="1" height="1" fill="#333"/><rect x="28" y="247" width="1" height="1" fill="#333"/><rect x="27" y="253" width="4" height="1" fill="#555"/><rect x="28" y="259" width="1" height="1" fill="#333"/><rect x="28" y="271" width="1" height="1" fill="#333"/><rect x="27" y="277" width="4" height="1" fill="#555"/><rect x="28" y="283" width="1" height="1" fill="#333"/><rect x="28" y="295" width="1" height="1" fill="#333"/><rect x="27" y="301" width="4" height="1" fill="#555"/><rect x="28" y="307" width="1" height="1" fill="#333"/><rect x="28" y="319" width="1" height="1" fill="#333"/><rect x="27" y="325" width="4" height="1" fill="#555"/><rect x="28" y="331" width="1" height="1" fill="#333"/><rect x="28" y="343" width="1" height="1" fill="#333"/><rect x="27" y="349" width="4" height="1" fill="#555"/><rect x="28" y="355" width="1" height="1" fill="#333"/><rect x="28" y="367" width="1" height="1" fill="#333"/><rect x="27" y="373" width="4" height="1" fill="#555"/><rect x="28" y="379" width="1" height="1" fill="#333"/><rect x="28" y="391" width="1" height="1" fill="#333"/><rect x="27" y="397" width="4" height="1" fill="#555"/><rect x="28" y="403" width="1" height="1" fill="#333"/><rect x="28" y="415" width="1" height="1" fill="#333"/><rect x="27" y="421" width="4" height="1" fill="#555"/><rect x="28" y="427" width="1" height="1" fill="#333"/><rect x="28" y="439" width="1" height="1" fill="#333"/><rect x="27" y="445" width="4" height="1" fill="#555"/><rect x="28" y="451" width="1" height="1" fill="#333"/><rect x="28" y="463" width="1" height="1" fill="#333"/><rect x="27" y="469" width="4" height="1" fill="#555"/><rect x="28" y="475" width="1" height="1" fill="#333"/><rect x="28" y="487" width="1" height="1" fill="#333"/><rect x="27" y="493" width="4" height="1" fill="#555"/><rect x="28" y="499" width="1" height="1" fill="#333"/><rect x="28" y="511" width="1" height="1" fill="#333"/><rect x="27" y="517" width="4" height="1" fill="#555"/><rect x="28" y="523" width="1" height="1" fill="#333"/><rect x="28" y="535" width="1" height="1" fill="#333"/><rect x="27" y="541" width="4" height="1" fill="#555"/><rect x="28" y="547" width="1" height="1" fill="#333"/><rect x="28" y="559" width="1" height="1" fill="#333"/><rect x="27" y="565" width="4" height="1" fill="#555"/><rect x="28" y="571" width="1" height="1" fill="#333"/><rect x="28" y="583" width="1" height="1" fill="#333"/><rect x="27" y="589" width="4" height="1" fill="#555"/><rect x="28" y="595" width="1" height="1" fill="#333"/><rect x="28" y="607" width="1" height="1" fill="#333"/><rect x="27" y="613" width="4" height="1" fill="#555"/><rect x="28" y="619" width="1" height="1" fill="#333"/><rect x="28" y="631" width="1" height="1" fill="#333"/><rect x="27" y="637" width="4" height="1" fill="#555"/><rect x="28" y="643" width="1" height="1" fill="#333"/><rect x="28" y="655" width="1" height="1" fill="#333"/><rect x="27" y="661" width="4" height="1" fill="#555"/><rect x="28" y="667" width="1" height="1" fill="#333"/><rect x="28" y="679" width="1" height="1" fill="#333"/><rect x="27" y="685" width="4" height="1" fill="#555"/><rect x="28" y="691" width="1" height="1" fill="#333"/><rect x="28" y="703" width="1" height="1" fill="#333"/><text transform="translate(32,217) rotate(-90)" text-anchor="middle" font-family="Liberation Sans" font-size="9.5" fill="#3a3a3a">2</text><text transform="translate(32,241) rotate(-90)" text-anchor="middle" font-family="Liberation Sans" font-size="9.5" fill="#3a3a3a">1</text><text transform="translate(32,289) rotate(-90)" text-anchor="middle" font-family="Liberation Sans" font-size="9.5" fill="#3a3a3a">1</text><text transform="translate(32,313) rotate(-90)" text-anchor="middle" font-family="Liberation Sans" font-size="9.5" fill="#3a3a3a">2</text><text transform="translate(32,337) rotate(-90)" text-anchor="middle" font-family="Liberation Sans" font-size="9.5" fill="#3a3a3a">3</text><text transform="translate(32,361) rotate(-90)" text-anchor="middle" font-family="Liberation Sans" font-size="9.5" fill="#3a3a3a">4</text><text transform="translate(32,385) rotate(-90)" text-anchor="middle" font-family="Liberation Sans" font-size="9.5" fill="#3a3a3a">5</text><text transform="translate(32,409) rotate(-90)" text-anchor="middle" font-family="Liberation Sans" font-size="9.5" fill="#3a3a3a">6</text><text transform="translate(32,433) rotate(-90)" text-anchor="middle" font-family="Liberation Sans" font-size="9.5" fill="#3a3a3a">7</text><text transform="translate(32,457) rotate(-90)" text-anchor="middle" font-family="Liberation Sans" font-size="9.5" fill="#3a3a3a">8</text><text transform="translate(32,481) rotate(-90)" text-anchor="middle" font-family="Liberation Sans" font-size="9.5" fill="#3a3a3a">9</text><text transform="translate(32,505) rotate(-90)" text-anchor="middle" font-family="Liberation Sans" font-size="9.5" fill="#3a3a3a">10</text><text transform="translate(32,529) rotate(-90)" text-anchor="middle" font-family="Liberation Sans" font-size="9.5" fill="#3a3a3a">11</text><text transform="translate(32,553) rotate(-90)" text-anchor="middle" font-family="Liberation Sans" font-size="9.5" fill="#3a3a3a">12</text><text transform="translate(32,577) rotate(-90)" text-anchor="middle" font-family="Liberation Sans" font-size="9.5" fill="#3a3a3a">13</text><text transform="translate(32,601) rotate(-90)" text-anchor="middle" font-family="Liberation Sans" font-size="9.5" fill="#3a3a3a">14</text><text transform="translate(32,625) rotate(-90)" text-anchor="middle" font-family="Liberation Sans" font-size="9.5" fill="#3a3a3a">15</text><text transform="translate(32,649) rotate(-90)" text-anchor="middle" font-family="Liberation Sans" font-size="9.5" fill="#3a3a3a">16</text><text transform="translate(32,673) rotate(-90)" text-anchor="middle" font-family="Liberation Sans" font-size="9.5" fill="#3a3a3a">17</text><text transform="translate(32,697) rotate(-90)" text-anchor="middle" font-family="Liberation Sans" font-size="9.5" fill="#3a3a3a">18</text><path d="M275.5,180.5H283.5L279.5,188.5Z M275.5,192.5H283.5L279.5,188.5Z" fill="#fff" stroke="#777" stroke-width="1"/><rect x="275.5" y="195.5" width="8" height="6" fill="#fff" stroke="#777"/><path d="M626.5,195.5V191.5L630.5,187.5L634.5,191.5V195.5Z" fill="#fff" stroke="#777" stroke-width="1"/></svg><svg class="ov" width="909" height="746" viewBox="0 0 909 746"><filter id="glow" x="-10%" y="-10%" width="120%" height="120%"><feGaussianBlur stdDeviation="2.1"/></filter><path d="M446,412.5 C450,406.5 459,405.6 476,405.4 L504,405.4 C516,405.6 522.8,407.5 522.8,413 L522.8,576.8 L547,576.8 C553,576.8 554.8,586 554.8,598 C554.8,611 552,620.5 547,620.5 L522.3,620.5 L522.3,670 C522.3,676 510,677.3 496,677.3 C482,677.3 469.6,676 469.6,670 L469.6,620.5 L364,620.5 C358,620.5 354.7,615 354.7,605 L354.7,590 C354.7,576 358,566 364,557 Z M469.6,453.4 L469.6,576.8 L399,576.8 Z" fill="none" stroke="#6f9ae0" stroke-width="5" stroke-opacity="0.9" filter="url(#glow)" fill-rule="evenodd"/><path d="M446,412.5 C450,406.5 459,405.6 476,405.4 L504,405.4 C516,405.6 522.8,407.5 522.8,413 L522.8,576.8 L547,576.8 C553,576.8 554.8,586 554.8,598 C554.8,611 552,620.5 547,620.5 L522.3,620.5 L522.3,670 C522.3,676 510,677.3 496,677.3 C482,677.3 469.6,676 469.6,670 L469.6,620.5 L364,620.5 C358,620.5 354.7,615 354.7,605 L354.7,590 C354.7,576 358,566 364,557 Z M469.6,453.4 L469.6,576.8 L399,576.8 Z" fill="#fdfdfe" fill-rule="evenodd" stroke="#4a78c8" stroke-width="1"/><path d="M274.5,261.5H637.5M274.5,261.5V707M637.5,261.5V707M455.5,236V261" fill="none" stroke="#8f8f8f" stroke-width="1"/><circle cx="274.6" cy="261.5" r="4.5" fill="#fff" stroke="#8f8f8f" stroke-width="1.8"/><circle cx="455.5" cy="261.5" r="4.5" fill="#fff" stroke="#8f8f8f" stroke-width="1.8"/><circle cx="637.5" cy="261.5" r="4.5" fill="#fff" stroke="#8f8f8f" stroke-width="1.8"/><circle cx="274.6" cy="505" r="4.5" fill="#fff" stroke="#8f8f8f" stroke-width="1.8"/><circle cx="637.5" cy="505" r="4.5" fill="#fff" stroke="#8f8f8f" stroke-width="1.8"/><path d="M458.2,236 A9.6,9.6 0 1 1 466,224.8 L471.5,224.5 L464.5,232.5 L457.5,225.8 L462,225.5 A5.6,5.6 0 1 0 457.5,232 Z" fill="#fff" stroke="#8f8f8f" stroke-width="1.2" stroke-linejoin="round"/><g fill="none" stroke="#2b88d8" stroke-width="1.2"><circle cx="253.5" cy="263" r="1.4"/><path d="M253.5,264.5V276"/><path d="M248,267.5Q248,276 253.5,276Q259,276 259,267.5"/><path d="M247,269L248,267L250,268.5M260,269L259,267L257,268.5"/></g><rect x="650.5" y="261.5" width="27" height="27" fill="#fff" stroke="#a0a0a0"/><path d="M653,266.5H675M653,282.5H675M672,270.5H675M672,274.5H675M672,278.5H675" stroke="#1e7fd0" stroke-width="1"/><path d="M659.5,278.5V276A4.5,4.5 0 0 1 668.5,276V278.5" fill="none" stroke="#333" stroke-width="3.2"/></svg><div class="t" style="left:23.90px;top:713.69px;font-size:11px;line-height:11px;color:#444444;transform:scaleX(0.95);transform-origin:0 0;">Раздел: 1</div><div class="t" style="left:87.90px;top:713.69px;font-size:11px;line-height:11px;color:#444444;transform:scaleX(1.025);transform-origin:0 0;">Страница 1 из 2</div><div class="t" style="left:191.90px;top:713.69px;font-size:11px;line-height:11px;color:#444444;transform:scaleX(0.98);transform-origin:0 0;">Слово 1 из 1</div><div class="t" style="left:309.10px;top:713.69px;font-size:11px;line-height:11px;color:#444444;transform:scaleX(1.03);transform-origin:0 0;">русский</div><div class="t" style="left:496.40px;top:713.69px;font-size:11px;line-height:11px;color:#444444;transform:scaleX(1.055);transform-origin:0 0;">Фокусировка</div><div class="t" style="left:843.00px;top:713.19px;font-size:11px;line-height:11px;color:#444444;transform:scaleX(0.96);transform-origin:0 0;">64 %</div><svg class="ov" width="909" height="746" viewBox="0 0 909 746"><rect x="618" y="708" width="40" height="21" fill="#d2d0ce"/><g fill="none" stroke="#444" stroke-width="1"><path d="M277.5,712.5V723.5H283M277.5,712.5H284.5V720M284.5,712.5H291.5V718"/><path d="M284,721L286.5,723.5L291,719"/></g><g fill="none" stroke="#444" stroke-width="1"><path d="M433,712.5H425.5V723.5H430"/><path d="M425.5,714.5H439.5V717"/><path d="M427.5,717.5H430M427.5,719.5H430M427.5,721.5H430"/><circle cx="435.5" cy="720.5" r="3.3"/></g><circle cx="435.5" cy="720.5" r="1.5" fill="#444"/><g fill="none" stroke="#444" stroke-width="1"><path d="M480,714V711.5H482.5M491.5,711.5H494V714M494,721.5V724H491.5M482.5,724H480V721.5"/><path d="M483.5,722V713.5H488.5L491,716V722Z"/></g><g fill="none" stroke="#444" stroke-width="1"><path d="M591.5,712.5H597.5V723.5H591.5Z M597.5,712.5H603.5V723.5H597.5Z"/><path d="M593,714.5H596M593,716.5H596M593,718.5H596M593,720.5H596M599,714.5H602M599,716.5H602M599,718.5H602M599,720.5H602"/></g><g fill="none" stroke="#444" stroke-width="1"><rect x="632.5" y="711.5" width="10" height="13"/><path d="M634.5,714.5H640.5M634.5,716.5H640.5M634.5,718.5H640.5M634.5,720.5H640.5M634.5,722.5H640.5"/></g><g fill="none" stroke="#444" stroke-width="1"><path d="M677,724.5H670.5V711.5H682.5V716"/><path d="M672.5,714H680.5M672.5,716.5H677M672.5,719H676"/><circle cx="681" cy="720.5" r="3.8" fill="#f3f2f1" stroke-width="1.3"/></g><path d="M677.5,720.5H684.5M681,717V724" stroke="#444" stroke-width="1"/><path d="M717,718.5H817M767.5,715.5V721" stroke="#a6a6a6" stroke-width="1"/><path d="M704.2,717.5H711.8M822,718.5H829.6M825.5,714.5V722.5" stroke="#444" stroke-width="1.1"/><rect x="746" y="712.7" width="5" height="11" fill="#666"/><rect x="876" y="204.5" width="15" height="500" fill="#dcdcdc"/><rect x="876.5" y="204.5" width="14" height="14" fill="#fff" stroke="#b0b0b0"/><path d="M879.5,214.5L883.5,210.5L887.5,214.5Z" fill="#555"/><rect x="876.5" y="218.5" width="14" height="163" fill="#fff" stroke="#b0b0b0"/><rect x="876.5" y="689.5" width="14" height="14" fill="#fff" stroke="#b0b0b0"/><path d="M880,695L884,699L888,695Z" fill="#555"/></svg><svg class="ov" width="909" height="746" viewBox="0 0 909 746"><filter id="sh" x="-5%" y="-5%" width="110%" height="110%"><feGaussianBlur stdDeviation="2.6"/></filter><rect x="252.6" y="241.5" width="403.8" height="466.7" rx="10" fill="none" stroke="#000" stroke-opacity="0.55" stroke-width="5.5" filter="url(#sh)"/><rect x="251.6" y="239.5" width="403.8" height="466.7" rx="10" fill="none" stroke="#ff0000" stroke-width="4.2"/></svg><svg class="ov" width="909" height="746" viewBox="0 0 909 746"><path fill="#000" fill-rule="evenodd" d="M0,0H909V746H0Z M21,16H888A5,5 0 0 1 893,21V722A8,8 0 0 1 885,730H24A8,8 0 0 1 16,722V21A5,5 0 0 1 21,16Z"/><path fill="none" stroke="#2b579a" stroke-width="1" d="M16.5,51V722A7.5,7.5 0 0 0 24,729.5H885A7.5,7.5 0 0 0 892.5,722V51"/></svg>
</body></html>
